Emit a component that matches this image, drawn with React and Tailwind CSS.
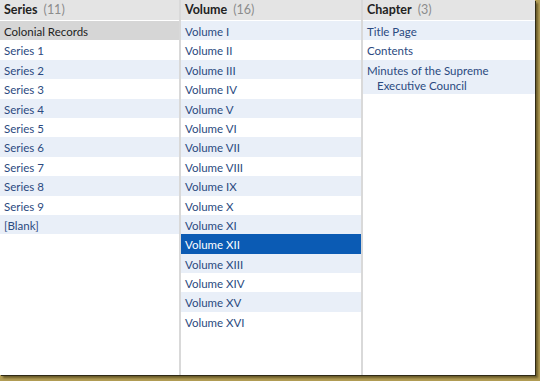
import React from 'react';

const SERIES = ['Colonial Records', 'Series 1', 'Series 2', 'Series 3', 'Series 4', 'Series 5', 'Series 6', 'Series 7', 'Series 8', 'Series 9', '[Blank]'];
const VOLUMES = ['Volume I', 'Volume II', 'Volume III', 'Volume IV', 'Volume V', 'Volume VI', 'Volume VII', 'Volume VIII', 'Volume IX', 'Volume X', 'Volume XI', 'Volume XII', 'Volume XIII', 'Volume XIV', 'Volume XV', 'Volume XVI'];
const CHAPTERS = ['Title Page', 'Contents', 'Minutes of the Supreme Executive Council'];

function Column({ title, count, items, selected, active, width, last }) {
  return (
    <div className={`flex flex-col h-full ${width} ${last ? '' : 'border-r-2 border-[#d9d9d9]'}`}>
      {/* Header */}
      <div className="h-[21px] flex items-center px-[4px] bg-[#e4e4e4] border-b border-white shrink-0 text-[12.5px]">
        <span className="font-bold text-[#222]">{title}</span>
        <span className="ml-[6px] text-[#8c8c8c]">({count})</span>
      </div>
      <div className="flex flex-col">
        {items.map((item, i) => {
          let cls = i % 2 === 0 ? 'bg-[#e9eff8] text-[#2b4a80]' : 'bg-white text-[#2b4a80]';
          if (i === selected) cls = 'bg-[#d6d6d6] text-[#222]';
          if (i === active) cls = 'bg-[#0b5bb4] text-white';
          return (
            <div key={item} className={`min-h-[19.4px] pt-[3px] pb-[1px] pl-[14px] -indent-[10px] pr-[4px] leading-[15px] ${cls}`}>
              {item}
            </div>
          );
        })}
      </div>
    </div>
  );
}

export default function App() {
  return (
    <div className="w-[540px] h-[381px] bg-[#b29d55] overflow-hidden" style={{ fontFamily: 'Lato, "Open Sans", sans-serif' }}>
      <div className="w-[535px] h-[375px] bg-white flex text-[11.5px] shadow-[1px_1px_0_#2f2a17,3px_3px_2px_#6a5b29]">
        <Column title="Series" count={11} items={SERIES} selected={0} width="w-[181px]" />
        <Column title="Volume" count={16} items={VOLUMES} active={11} width="w-[182px]" />
        <Column title="Chapter" count={3} items={CHAPTERS} width="flex-1" last />
      </div>
    </div>
  );
}
